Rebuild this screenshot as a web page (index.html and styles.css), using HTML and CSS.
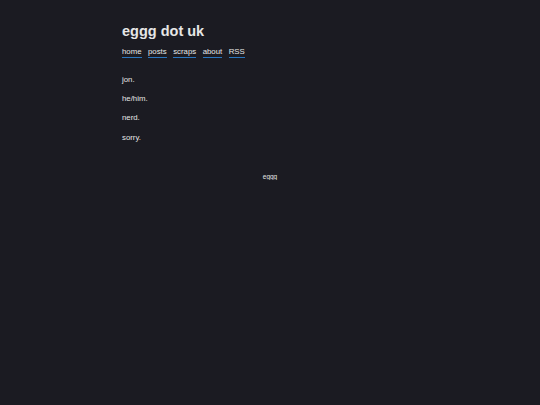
FILE: index.html
```html
<!DOCTYPE html>
<html>
<head>
<meta charset="utf-8">
<link rel="stylesheet" href="styles.css">
</head>
<body>
<div class="page">
  <header class="header">
    <h1 class="title">eggg dot uk</h1>
    <nav class="nav">
      <a href="#">home</a>
      <a href="#">posts</a>
      <a href="#">scraps</a>
      <a href="#">about</a>
      <a href="#">RSS</a>
    </nav>
  </header>
  <main class="content">
    <p>jon.</p>
    <p>he/him.</p>
    <p>nerd.</p>
    <p>sorry.</p>
  </main>
  <footer class="footer"><a href="#">eggg</a></footer>
</div>
</body>
</html>
```
FILE: styles.css
```css
html, body {
  margin: 0;
  padding: 0;
  background: #1b1b22;
  color: #e6e6e6;
  font-family: "Liberation Sans", Arial, sans-serif;
}
.page {
  width: 296px;
  margin: 0 auto;
  padding-top: 23px;
}
.title {
  margin: 0;
  font-size: 14.5px;
  font-weight: bold;
  line-height: 17px;
}
.nav {
  display: flex;
  gap: 6.5px;
  margin-top: 7px;
  font-size: 7.8px;
  line-height: 10px;
}
.nav a {
  color: #e6e6e6;
  text-decoration: none;
  border-bottom: 1px solid #2a75bd;
}
.content {
  margin-top: 17px;
  font-size: 7.8px;
  line-height: 10px;
}
.content p {
  margin: 0 0 9.2px 0;
}
.footer {
  text-align: center;
  margin-top: 30px;
  font-size: 6.5px;
}
.footer a {
  color: #e6e6e6;
  text-decoration: none;
  border-bottom: 1px solid #3a3f55;
}
```
